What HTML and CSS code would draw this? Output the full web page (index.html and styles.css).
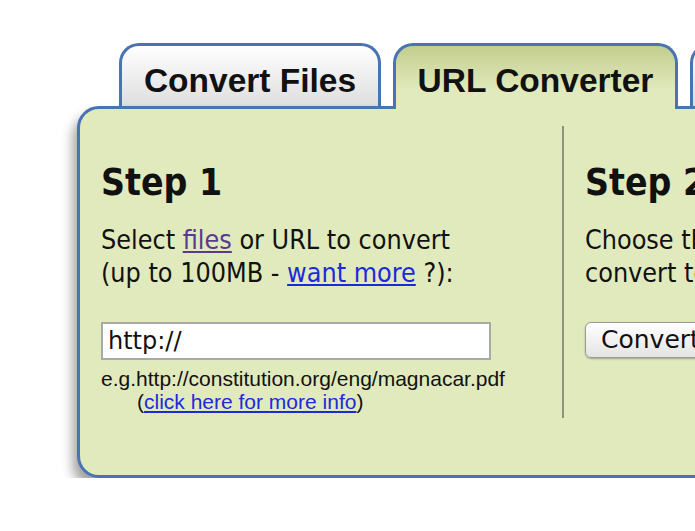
FILE: index.html
```html
<!DOCTYPE html>
<html lang="en">
<head>
  <meta charset="UTF-8" />
  <title>URL Converter</title>
  <link rel="stylesheet" href="styles.css">
</head>
<body>
  <div class="page">
    <div class="tabs">
      <div class="tab">Convert Files</div>
      <div class="tab active">URL Converter</div>
      <div class="tab more"></div>
    </div>

    <div class="panel">
      <div class="step step-one">
        <h2>Step 1</h2>
        <p class="lead">
          Select <a href="#" class="visited">files</a> or URL to convert<br>
          (up to 100MB - <a href="#">want more</a> ?):
        </p>
        <input type="text" class="url-input" value="http://">
        <div class="hint">
          e.g.http://constitution.org/eng/magnacar.pdf<br>
          <span class="hint-more">(<a href="#">click here for more info</a>)</span>
        </div>
      </div>

      <div class="step step-two">
        <h2>Step 2</h2>
        <p class="lead">
          Choose the format you want to<br>
          convert to:
        </p>
        <div class="select-box">Convert files to:</div>
      </div>
    </div>
  </div>
</body>
</html>
```

FILE: styles.css
```css
html, body {
  margin: 0;
  background: #fff;
  overflow: hidden;
}
.page {
  padding: 43px 0 0 77px;
  width: 1100px;
}
.tabs {
  display: flex;
  gap: 12px;
  margin-left: 42px;
  height: 63px;
}
.tab {
  flex: none;
  box-sizing: border-box;
  height: 63px;
  border: 3px solid #4a73b3;
  border-bottom: none;
  border-radius: 20px 20px 0 0;
  background: linear-gradient(#ffffff, #dedede);
  font-family: "Liberation Sans", Arial, sans-serif;
  font-weight: bold;
  font-size: 33.5px;
  color: #111;
  padding-top: 18px;
  width: 262px;
  text-align: center;
  line-height: 1;
  white-space: nowrap;
}
.tab.active {
  width: 285px;
  height: 66px;
  margin-bottom: -3px;
  position: relative;
  z-index: 2;
  background: linear-gradient(#c3cd8e, #e1eabc 70%);
}
.tab.more {
  width: 200px;
}
.panel {
  position: relative;
  z-index: 1;
  display: flex;
  box-sizing: border-box;
  height: 372px;
  width: 900px;
  border: 3px solid #4a73b3;
  border-radius: 22px;
  background: #e1eabc;
  box-shadow: -4px 9px 12px rgba(0, 0, 0, 0.38);
  padding-top: 17px;
}
.step {
  flex: none;
  color: #111;
  font-family: "DejaVu Sans Condensed", "DejaVu Sans", sans-serif;
}
.step-one {
  width: 461px;
  padding-left: 21px;
  border-right: 2px solid #8d8f80;
  height: 292px;
}
.step-two {
  padding-left: 21px;
  white-space: nowrap;
}
h2 {
  margin: 0;
  padding-top: 38px;
  font-size: 37px;
  line-height: 1;
}
.lead {
  margin: 22px 0 0;
  font-size: 26.7px;
  line-height: 33px;
}
a {
  color: #1b2bdc;
}
a.visited {
  color: #5a3a8c;
}
.url-input {
  display: block;
  box-sizing: border-box;
  margin-top: 33px;
  width: 390px;
  height: 38px;
  border: 2px solid #a9a9a9;
  padding: 0 5px;
  font-family: "DejaVu Sans", sans-serif;
  font-size: 24px;
  color: #111;
  background: #fff;
}
.hint {
  margin-top: 7px;
  font-family: "Liberation Sans", Arial, sans-serif;
  font-size: 21px;
  line-height: 23px;
}
.hint-more {
  padding-left: 36px;
}
.select-box {
  box-sizing: border-box;
  margin-top: 33px;
  height: 36px;
  width: 240px;
  border: 1px solid #9a9a9a;
  border-radius: 6px;
  background: linear-gradient(#ffffff, #e4e4e4);
  box-shadow: 0 1px 2px rgba(0, 0, 0, 0.3);
  font-family: "DejaVu Sans", sans-serif;
  font-size: 25px;
  line-height: 34px;
  padding-left: 15px;
}
```
